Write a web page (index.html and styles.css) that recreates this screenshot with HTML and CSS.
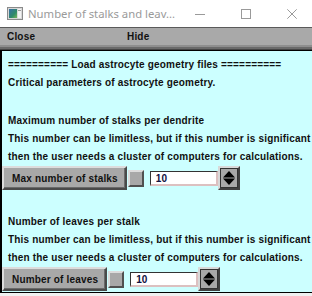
FILE: index.html
```html
<!DOCTYPE html>
<html>
<head>
<meta charset="utf-8">
<link rel="stylesheet" href="styles.css">
</head>
<body>
<div class="window">
  <div class="titlebar">
    <svg class="appicon" width="16" height="13" viewBox="0 0 16 13">
      <rect x="0.5" y="0.5" width="15" height="12" fill="#d8d8d8" stroke="#8a8a8a"/>
      <defs>
        <linearGradient id="g" x1="0" y1="0" x2="1" y2="1">
          <stop offset="0" stop-color="#3a6ea8"/>
          <stop offset="0.6" stop-color="#2f8a6a"/>
          <stop offset="1" stop-color="#7ab85a"/>
        </linearGradient>
      </defs>
      <rect x="2" y="2" width="8" height="9" fill="url(#g)"/>
      <rect x="11" y="2" width="3" height="9" fill="#f4f4f4"/>
      <rect x="11" y="3" width="3" height="1" fill="#9a9a9a"/>
    </svg>
    <span class="title">Number of stalks and leav...</span>
    <div class="controls">
      <span class="ctl"><svg width="10" height="10" viewBox="0 0 10 10"><line x1="0" y1="5.5" x2="10" y2="5.5" stroke="#9a9a9a"/></svg></span>
      <span class="ctl"><svg width="10" height="10" viewBox="0 0 10 10"><rect x="0.5" y="0.5" width="9" height="9" fill="none" stroke="#9a9a9a"/></svg></span>
      <span class="ctl"><svg width="10" height="10" viewBox="0 0 10 10"><path d="M0.3 0.3L9.7 9.7M9.7 0.3L0.3 9.7" stroke="#9a9a9a" stroke-width="1"/></svg></span>
    </div>
  </div>
  <div class="menubar">
    <span class="menu-item">Close</span>
    <span class="menu-item">Hide</span>
  </div>
  <div class="menushade"></div>
  <div class="content">
    <div class="intro">
      <p class="line">========== Load astrocyte geometry files ==========</p>
      <p class="line">Critical parameters of astrocyte geometry.</p>
    </div>
    <section class="group">
      <p class="line">Maximum number of stalks per dendrite</p>
      <p class="line">This number can be limitless, but if this number is significant</p>
      <p class="line">then the user needs a cluster of computers for calculations.</p>
      <div class="control-row">
        <button class="btn">Max number of stalks</button>
        <span class="sq"></span>
        <input class="num" type="text" value="10">
        <span class="spin"><svg width="14" height="16" viewBox="0 0 14 16"><path d="M7 1L13 7.5H1Z" fill="#000"/><path d="M1 8.5H13L7 15Z" fill="#000"/></svg></span>
      </div>
    </section>
    <section class="group">
      <p class="line">Number of leaves per stalk</p>
      <p class="line">This number can be limitless, but if this number is significant</p>
      <p class="line">then the user needs a cluster of computers for calculations.</p>
      <div class="control-row">
        <button class="btn">Number of leaves</button>
        <span class="sq"></span>
        <input class="num" type="text" value="10">
        <span class="spin"><svg width="14" height="16" viewBox="0 0 14 16"><path d="M7 1L13 7.5H1Z" fill="#000"/><path d="M1 8.5H13L7 15Z" fill="#000"/></svg></span>
      </div>
    </section>
  </div>
</div>
</body>
</html>
```
FILE: styles.css
```css
html, body {
  margin: 0;
  padding: 0;
}
body {
  width: 312px;
  height: 296px;
  overflow: hidden;
  background: #f0f0f0;
  font-family: "Liberation Sans", Arial, sans-serif;
}
.window {
  width: 312px;
}
.titlebar {
  height: 27px;
  background: #ffffff;
  border-bottom: 1px solid #5a5a5a;
  display: flex;
  align-items: center;
  overflow: hidden;
}
.appicon {
  margin-left: 7px;
  margin-top: -1px;
  flex: none;
}
.title {
  margin-left: 5px;
  font-family: "Noto Sans", "Open Sans", sans-serif;
  font-size: 11.3px;
  color: #9a9a9a;
  white-space: nowrap;
}
.controls {
  margin-left: auto;
  margin-right: -3px;
  display: flex;
  flex: none;
}
.ctl {
  width: 46px;
  height: 27px;
  display: flex;
  align-items: center;
  justify-content: center;
}
.menubar {
  height: 17px;
  background: #a9a9a9;
  display: flex;
  align-items: center;
  font-size: 10px;
  font-weight: bold;
  letter-spacing: 0.18px;
  color: #111;
}
.menu-item {
  margin-left: 7px;
  width: 113px;
}
.menushade {
  height: 6px;
  background: linear-gradient(#8e8e8e 0, #8e8e8e 2px, #6a6a6a 2px, #6a6a6a 4px, #444 4px, #444 5px, #000 5px);
}
.content {
  background: #ccffff;
  border-left: 2px solid #000;
  border-bottom: 1px solid #000;
  height: 242px;
  padding-top: 5px;
  box-sizing: border-box;
  font-size: 10px;
  font-weight: bold;
  letter-spacing: 0.18px;
  color: #111;
}
.line {
  margin: 0;
  padding-left: 6px;
  height: 18px;
  line-height: 18px;
  white-space: nowrap;
}
.intro {
  margin-bottom: 20px;
}
.group + .group {
  margin-top: 23px;
}
.control-row {
  display: flex;
  align-items: center;
  height: 24px;
}
.btn {
  font-family: "Liberation Sans", Arial, sans-serif;
  font-size: 10px;
  font-weight: bold;
  letter-spacing: 0.18px;
  color: #111;
  height: 24px;
  padding: 0 7px 0 8px;
  margin: 0;
  background: #a8a8a8;
  border: 2px solid;
  border-color: #dcdcdc #4a4a4a #4a4a4a #dcdcdc;
  box-shadow: inset -1px -1px 0 #6a6a6a;
}
.sq {
  width: 16px;
  height: 17px;
  margin-left: 1px;
  box-sizing: border-box;
  background: #a8a8a8;
  border: 2px solid;
  border-color: #dcdcdc #505050 #505050 #dcdcdc;
}
.num {
  width: 68px;
  height: 15px;
  margin: 1px 0 0 6px;
  padding: 0 0 0 5px;
  box-sizing: border-box;
  border: 1px solid;
  border-width: 1px 2px 2px 1px;
  border-color: #333 #dcc0c0 #dcc0c0 #333;
  background: #fff;
  font-family: "Liberation Sans", Arial, sans-serif;
  font-size: 10px;
  font-weight: bold;
  color: #101040;
  outline: none;
}
.spin {
  width: 22px;
  height: 24px;
  box-sizing: border-box;
  background: #a8a8a8;
  border: 2px solid;
  border-color: #d8d8d8 #404040 #404040 #d8d8d8;
  box-shadow: 0 0 0 1px #333 inset;
  display: flex;
  align-items: center;
  justify-content: center;
}
.spin svg {
  display: block;
}
```
